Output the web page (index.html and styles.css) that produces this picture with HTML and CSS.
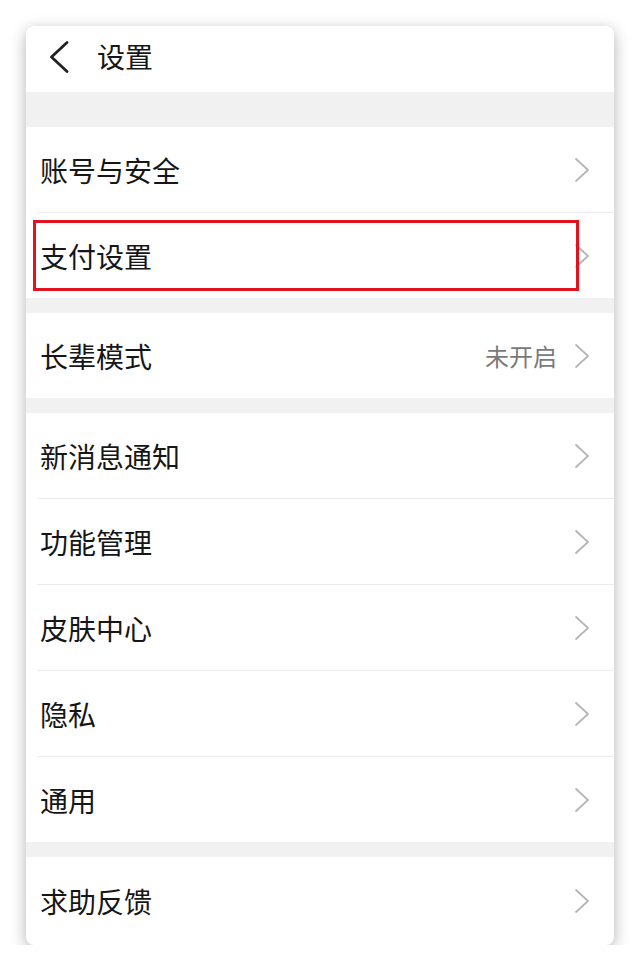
FILE: index.html
```html
<!DOCTYPE html>
<html lang="zh-CN">
<head>
<meta charset="utf-8">
<title>设置</title>
<link rel="stylesheet" href="styles.css">
</head>
<body>
<div class="card">
  <div class="header">
    <svg class="back" width="22" height="32" viewBox="0 0 22 32"><polyline points="19,1.5 3.5,16 19,30.5" fill="none" stroke="#222" stroke-width="2.8" stroke-linecap="round" stroke-linejoin="round"/></svg>
    <span class="title">设置</span>
  </div>
  <div class="band band-big"></div>
  <div class="group">
    <div class="row"><span class="label">账号与安全</span><svg class="chev" width="16" height="26" viewBox="0 0 16 26"><polyline points="1.5,1.5 14,13 1.5,24.5" fill="none" stroke="#b5b5b5" stroke-width="1.8"/></svg></div>
    <div class="divider"></div>
    <div class="row highlighted"><span class="label">支付设置</span><svg class="chev" width="16" height="26" viewBox="0 0 16 26"><polyline points="1.5,1.5 14,13 1.5,24.5" fill="none" stroke="#b5b5b5" stroke-width="1.8"/></svg><div class="redbox"></div></div>
  </div>
  <div class="band"></div>
  <div class="group">
    <div class="row"><span class="label">长辈模式</span><span class="value">未开启</span><svg class="chev" width="16" height="26" viewBox="0 0 16 26"><polyline points="1.5,1.5 14,13 1.5,24.5" fill="none" stroke="#b5b5b5" stroke-width="1.8"/></svg></div>
  </div>
  <div class="band"></div>
  <div class="group">
    <div class="row"><span class="label">新消息通知</span><svg class="chev" width="16" height="26" viewBox="0 0 16 26"><polyline points="1.5,1.5 14,13 1.5,24.5" fill="none" stroke="#b5b5b5" stroke-width="1.8"/></svg></div>
    <div class="divider"></div>
    <div class="row"><span class="label">功能管理</span><svg class="chev" width="16" height="26" viewBox="0 0 16 26"><polyline points="1.5,1.5 14,13 1.5,24.5" fill="none" stroke="#b5b5b5" stroke-width="1.8"/></svg></div>
    <div class="divider"></div>
    <div class="row"><span class="label">皮肤中心</span><svg class="chev" width="16" height="26" viewBox="0 0 16 26"><polyline points="1.5,1.5 14,13 1.5,24.5" fill="none" stroke="#b5b5b5" stroke-width="1.8"/></svg></div>
    <div class="divider"></div>
    <div class="row"><span class="label">隐私</span><svg class="chev" width="16" height="26" viewBox="0 0 16 26"><polyline points="1.5,1.5 14,13 1.5,24.5" fill="none" stroke="#b5b5b5" stroke-width="1.8"/></svg></div>
    <div class="divider"></div>
    <div class="row"><span class="label">通用</span><svg class="chev" width="16" height="26" viewBox="0 0 16 26"><polyline points="1.5,1.5 14,13 1.5,24.5" fill="none" stroke="#b5b5b5" stroke-width="1.8"/></svg></div>
  </div>
  <div class="band"></div>
  <div class="group">
    <div class="row row-last"><span class="label">求助反馈</span><svg class="chev" width="16" height="26" viewBox="0 0 16 26"><polyline points="1.5,1.5 14,13 1.5,24.5" fill="none" stroke="#b5b5b5" stroke-width="1.8"/></svg></div>
  </div>
</div>
</body>
</html>
```
FILE: styles.css
```css
html, body {
  margin: 0;
  padding: 0;
  background: #ffffff;
}
body {
  font-family: "Noto Sans CJK SC", "Noto Sans", sans-serif;
  color: #161616;
  padding: 26px 0 0 26px;
}
.card {
  width: 588px;
  height: 919px;
  background: #ffffff;
  border-radius: 8px;
  overflow: hidden;
  box-shadow: 0 4px 16px rgba(0, 0, 0, 0.3);
  display: flex;
  flex-direction: column;
}
.header {
  height: 66px;
  display: flex;
  align-items: center;
  padding-left: 22px;
  gap: 27px;
  flex-shrink: 0;
}
.back {
  display: block;
  margin-top: -4px;
}
.title {
  font-size: 28px;
  line-height: 1;
  margin-top: -6px;
}
.band {
  height: 15px;
  background: #f1f1f1;
  flex-shrink: 0;
}
.band-big {
  height: 35px;
}
.group {
  display: flex;
  flex-direction: column;
}
.row {
  position: relative;
  height: 85px;
  display: flex;
  align-items: center;
  padding: 0 24px 0 14px;
  flex-shrink: 0;
}
.row-last {
  height: 87px;
}
.label {
  flex: 1;
  font-size: 28px;
  line-height: 1;
}
.value {
  font-size: 24px;
  line-height: 1;
  color: #7a7a7a;
  margin-right: 17px;
}
.chev {
  display: block;
}
.divider {
  height: 1px;
  background: #ededed;
  margin-left: 11px;
}
.redbox {
  position: absolute;
  left: 7px;
  top: 7px;
  width: 540px;
  height: 65px;
  border: 3px solid #e2131f;
}
```
